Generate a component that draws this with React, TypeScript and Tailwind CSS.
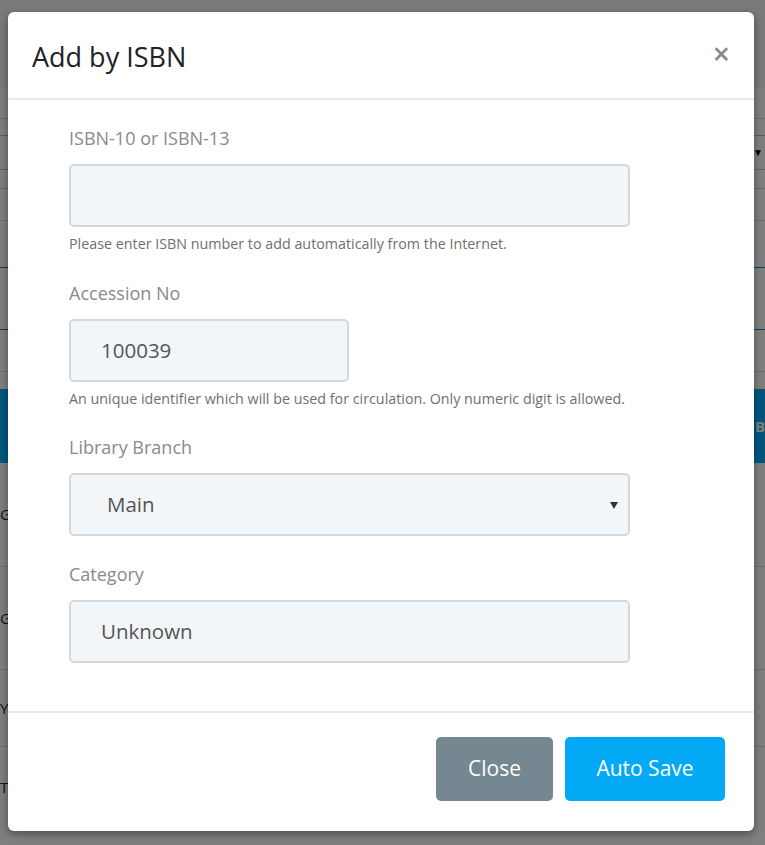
const fieldBox =
  "h-[63px] rounded-[5px] border-2 border-[#d3d8dd] bg-[#f3f6f9] text-[20.5px] text-[#555] flex items-center";

function BackgroundPage() {
  return (
    <div className="flex flex-col w-full h-full bg-white">
      <div className="h-[88px] bg-[#f4f4f4]" />
      <div className="h-[31px] border-b border-[#d9d9d9]" />
      <div className="h-[17px] border-b border-[#b9b9b9]" />
      <div className="h-[34px] border-b border-[#c4c4c4] flex justify-end items-center pr-[2px]">
        <span className="text-[10px] text-black">▼</span>
      </div>
      <div className="h-[19px] border-b border-[#c9d4dc]" />
      <div className="h-[32px] border-b border-[#dcdcdc]" />
      <div className="h-[47px] border-b border-[#0a8fc9]" />
      <div className="h-[62px] border-b border-[#0a8fc9]" />
      <div className="h-[42px] border-b border-[#dcdcdc]" />
      <div className="h-[17px]" />
      <div className="h-[74px] bg-[#00aeff] flex justify-end items-center">
        <span className="text-[15px] font-bold text-white">B</span>
      </div>
      <div className="h-[104px] border-b border-[#dcdcdc] flex items-center">
        <span className="text-[15px] text-[#222]">G</span>
      </div>
      <div className="h-[103px] border-b border-[#dcdcdc] flex items-center">
        <span className="text-[15px] text-[#222]">G</span>
      </div>
      <div className="h-[77px] border-b border-[#dcdcdc] flex items-center">
        <span className="text-[15px] text-[#222]">Y</span>
      </div>
      <div className="h-[80px] flex items-center">
        <span className="text-[15px] text-[#222]">T</span>
      </div>
    </div>
  );
}

function Field({
  label,
  help,
  children,
}: {
  label: string;
  help?: string;
  children: React.ReactNode;
}) {
  return (
    <div className="flex flex-col">
      <label className="text-[18px] leading-[26px] text-[#8a8a8a]">{label}</label>
      <div className="mt-[13px]">{children}</div>
      {help && (
        <p className="mt-[8px] text-[14.3px] leading-[18px] text-[#6f6f6f]">{help}</p>
      )}
    </div>
  );
}

export default function App() {
  return (
    <div
      className="relative w-[765px] h-[845px] overflow-hidden"
      style={{ fontFamily: '"Open Sans", "Liberation Sans", sans-serif' }}
    >
      <BackgroundPage />
      <div className="absolute inset-0 bg-black/50" />

      <div className="absolute left-[8px] top-[12px] w-[746px] h-[819px] bg-white rounded-[6px] shadow-[0_3px_9px_rgba(0,0,0,0.4)] flex flex-col">
        <div className="h-[88px] border-b-2 border-[#e6ebef] flex items-center justify-between pl-[24px] pr-[24px]">
          <h2 className="text-[27px] text-[#222] leading-none mt-[2px]">Add by ISBN</h2>
          <button className="text-[#888] text-[30px] font-semibold leading-none mt-[-2px]">×</button>
        </div>

        <div className="flex-1 pl-[61px] pt-[25px]">
          <div className="w-[561px] flex flex-col">
            <Field
              label="ISBN-10 or ISBN-13"
              help="Please enter ISBN number to add automatically from the Internet."
            >
              <div className={`${fieldBox} w-full`} />
            </Field>

            <div className="mt-[27px]">
              <Field
                label="Accession No"
                help="An unique identifier which will be used for circulation. Only numeric digit is allowed."
              >
                <div className={`${fieldBox} w-[280px] pl-[30px]`}>100039</div>
              </Field>
            </div>

            <div className="mt-[26px]">
              <Field label="Library Branch">
                <div className={`${fieldBox} w-full pl-[36px] pr-[10px] justify-between`}>
                  <span>Main</span>
                  <svg width="8" height="7" viewBox="0 0 8 7" className="mt-[1px]">
                    <path d="M0 0 H8 L4 7 Z" fill="#333" />
                  </svg>
                </div>
              </Field>
            </div>

            <div className="mt-[25px]">
              <Field label="Category">
                <div className={`${fieldBox} w-full pl-[30px]`}>Unknown</div>
              </Field>
            </div>
          </div>
        </div>

        <div className="h-[120px] border-t-2 border-[#e6ebef] flex items-start justify-end gap-[12px] pt-[24px] pr-[29px]">
          <button className="w-[117px] h-[64px] rounded-[5px] bg-[#758891] text-white text-[21px]">
            Close
          </button>
          <button className="w-[160px] h-[64px] rounded-[5px] bg-[#03a9f4] text-white text-[21px]">
            Auto Save
          </button>
        </div>
      </div>
    </div>
  );
}
